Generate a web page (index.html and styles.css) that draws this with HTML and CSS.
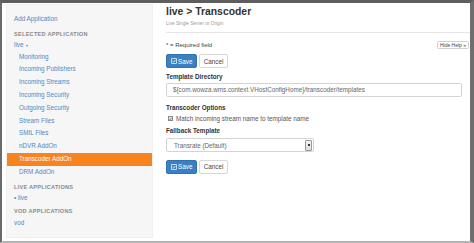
FILE: index.html
```html
<!DOCTYPE html>
<html>
<head>
<meta charset="utf-8">
<link rel="stylesheet" href="styles.css">
</head>
<body>
<div class="frame">
  <nav class="sidebar">
    <a class="link top">Add Application</a>
    <div class="head h1">SELECTED APPLICATION</div>
    <a class="link app">live <span class="caret"></span></a>
    <ul class="menu">
      <li>Monitoring</li>
      <li>Incoming Publishers</li>
      <li>Incoming Streams</li>
      <li>Incoming Security</li>
      <li>Outgoing Security</li>
      <li>Stream Files</li>
      <li>SMIL Files</li>
      <li>nDVR AddOn</li>
      <li class="active">Transcoder AddOn</li>
      <li>DRM AddOn</li>
    </ul>
    <div class="head h2">LIVE APPLICATIONS</div>
    <a class="link live">&bull; live</a>
    <div class="head h3">VOD APPLICATIONS</div>
    <a class="link vod">vod</a>
  </nav>
  <main class="main">
    <h1 class="title">live &gt; Transcoder</h1>
    <div class="subtitle">Live Single Server or Origin</div>
    <hr class="rule">
    <div class="reqrow">
      <span class="req">* = Required field</span>
      <button class="help">Hide Help &raquo;</button>
    </div>
    <div class="btns b1">
      <button class="btn save"><svg viewBox="0 0 10 10" width="6" height="6"><rect x="0.7" y="0.7" width="8.6" height="8.6" rx="1" fill="none" stroke="#fff" stroke-width="1.3"/><path d="M2.6 5.2 L4.3 6.9 L7.5 3.3" fill="none" stroke="#fff" stroke-width="1.4"/></svg>Save</button>
      <button class="btn cancel">Cancel</button>
    </div>
    <div class="label l1">Template Directory</div>
    <div class="input">${com.wowza.wms.context.VHostConfigHome}/transcoder/templates</div>
    <div class="label l2">Transcoder Options</div>
    <div class="check"><span class="box"><svg viewBox="0 0 10 10" width="4" height="4"><path d="M1.5 5 L4 7.5 L8.5 2" fill="none" stroke="#444" stroke-width="1.8"/></svg></span>Match incoming stream name to template name</div>
    <div class="label l3">Fallback Template</div>
    <div class="select"><span>Transrate (Default)</span><span class="arrow"><span class="dot"></span></span></div>
    <div class="btns b2">
      <button class="btn save"><svg viewBox="0 0 10 10" width="6" height="6"><rect x="0.7" y="0.7" width="8.6" height="8.6" rx="1" fill="none" stroke="#fff" stroke-width="1.3"/><path d="M2.6 5.2 L4.3 6.9 L7.5 3.3" fill="none" stroke="#fff" stroke-width="1.4"/></svg>Save</button>
      <button class="btn cancel">Cancel</button>
    </div>
  </main>
</div>
</body>
</html>
```
FILE: styles.css
```css
* { box-sizing: border-box; }
html, body { margin: 0; padding: 0; background: #fff; }
body { font-family: "Liberation Sans", Arial, sans-serif; color: #333; }
.frame {
  width: 474px; height: 243px;
  border-top: 3px solid #5e5e5e;
  border-left: 2px solid #6a6a6a;
  border-right: 4px solid #6e6e6e;
  border-bottom: 2px solid #b4b4b4;
  display: flex;
  background: #fff;
}
.sidebar {
  width: 147px;
  margin: 1px 0 3px 4px;
  background: #f6f6f6;
  border: 1px solid #f0f0f0;
  padding: 7.6px 0 0 0;
  display: flex; flex-direction: column;
  font-size: 6.3px;
}
.link { color: #5585c2; padding-left: 7px; display: block; }
.top { line-height: 12.7px; }
.head { color: #8a8a8a; font-size: 5.6px; letter-spacing: 0.25px; padding-left: 7px; line-height: 12.7px; font-weight: bold; }
.h1 { margin-top: 2.3px; }
.app { line-height: 10.3px; }
.caret { display: inline-block; width: 0; height: 0; border-left: 1.8px solid transparent; border-right: 1.8px solid transparent; border-top: 2.2px solid #5585c2; vertical-align: middle; margin-left: 1px; }
.menu { list-style: none; margin: 0; padding: 0; }
.menu li { line-height: 12.8px; padding-left: 12px; color: #5585c2; }
.menu li.active { background: #f7841e; color: #fff; }
.h2 { margin-top: 2px; }
.live { line-height: 9.3px; }
.h3 { margin-top: 2px; }
.vod { line-height: 11.3px; }
.main { flex: 1; padding: 2px 8px 0 13px; display: flex; flex-direction: column; align-items: flex-start; }
.title { margin: 0; font-size: 10.4px; font-weight: bold; line-height: 14px; color: #333; }
.subtitle { margin-top: 2px; font-size: 4.7px; line-height: 6px; color: #9a9a9a; }
.rule { margin: 5px -8px 0 0; border: 0; border-top: 1px solid #e6e6e6; height: 0; align-self: stretch; }
.reqrow { align-self: stretch; display: flex; justify-content: space-between; align-items: center; margin-top: 7px; height: 10px; margin-right: -7px; }
.req { font-size: 6px; color: #444; }
.help { font-family: inherit; font-size: 5px; color: #444; background: #fff; border: 1px solid #d0d0d0; border-radius: 1.5px; height: 8.4px; width: 32px; padding: 0; line-height: 6px; }
.btns { display: flex; gap: 2px; }
.b1 { margin-top: 4px; }
.b2 { margin-top: 7.3px; }
.btn { font-family: inherit; font-size: 6.3px; height: 14px; border-radius: 2px; padding: 0; display: flex; align-items: center; justify-content: center; }
.save { width: 31px; background: #3b80c4; border: 1px solid #3272ad; color: #fff; gap: 1.5px; }
.cancel { width: 29px; background: #fff; border: 1px solid #d8d8d8; color: #444; }
.label { font-size: 6.3px; font-weight: bold; line-height: 10px; color: #333; }
.l1 { margin-top: 3.7px; }
.l2 { margin-top: 6px; }
.l3 { margin-top: 2.5px; }
.input { align-self: stretch; margin-top: 1px; height: 14px; border: 1px solid #d4d4d4; border-radius: 2px; font-size: 6.3px; color: #666; line-height: 12px; padding-left: 6px; white-space: nowrap; }
.check { margin-top: 1px; font-size: 6.3px; line-height: 10px; color: #555; display: flex; align-items: center; padding-left: 2px; }
.box { width: 5px; height: 5px; border: 0.6px solid #888; background: #e2e2e2; margin-right: 3px; display: flex; align-items: center; justify-content: center; }
.select { margin-top: 1.5px; width: 148px; height: 14.7px; border: 1px solid #d4d4d4; border-radius: 2px; font-size: 6.3px; color: #666; display: flex; align-items: center; justify-content: space-between; padding-left: 7px; padding-right: 1px; }
.arrow { width: 7px; height: 11px; border: 1px solid #999; border-radius: 1px; background: linear-gradient(#f4f4f4, #dcdcdc); display: flex; align-items: center; justify-content: center; }
.dot { width: 2px; height: 2px; background: #333; }
```
